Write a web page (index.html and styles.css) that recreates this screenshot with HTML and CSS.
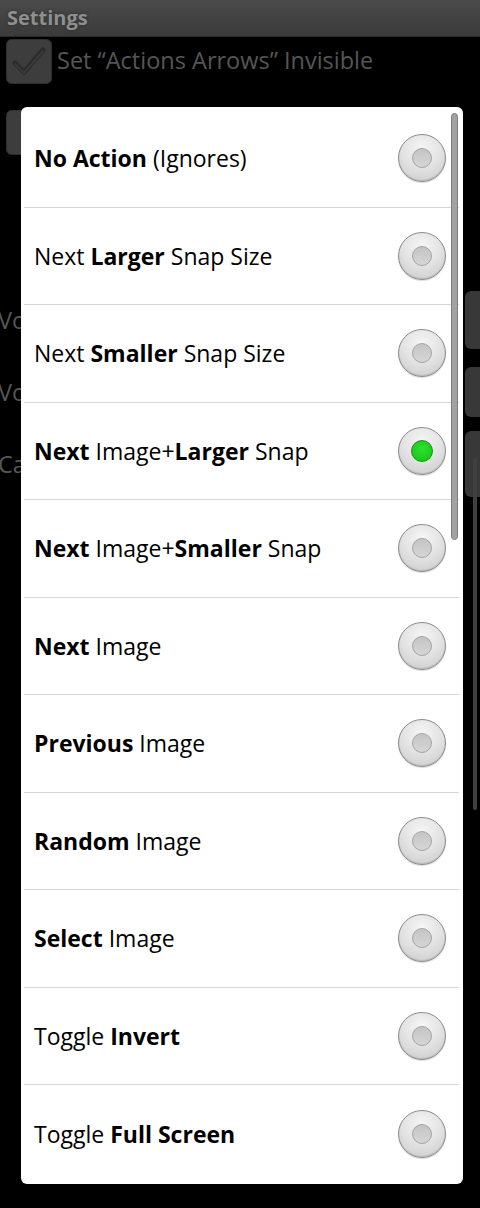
FILE: index.html
```html
<!DOCTYPE html>
<html>
<head>
<meta charset="utf-8">
<link rel="stylesheet" href="styles.css">
</head>
<body>
<div class="screen">
  <div class="titlebar">Settings</div>
  <div class="prefs">
    <div class="pref pref-check">
      <svg class="checkbox" viewBox="0 0 46 45" width="46" height="45">
        <rect x="0.5" y="0.5" width="45" height="44" rx="5" fill="#3d3d3d" stroke="#2e2e2e"/>
        <path d="M9 24 L18 33 L37 11" fill="none" stroke="#2c2c2c" stroke-width="5" stroke-linecap="round" stroke-linejoin="round"/>
        <path d="M9 25 L18 34 L37 12" fill="none" stroke="#4a4a4a" stroke-width="1.5" stroke-linecap="round" stroke-linejoin="round" opacity="0.6"/>
      </svg>
      <span class="pref-label">Set “Actions Arrows” Invisible</span>
    </div>
    <div class="pref pref-check2">
      <svg class="checkbox" viewBox="0 0 46 45" width="46" height="45">
        <rect x="0.5" y="0.5" width="45" height="44" rx="5" fill="#3d3d3d" stroke="#2e2e2e"/>
      </svg>
    </div>
    <div class="pref pref-row first">
      <span class="pref-label">Volume Up Action</span>
      <span class="pref-btn"></span>
    </div>
    <div class="pref pref-row">
      <span class="pref-label">Volume Down Action</span>
      <span class="pref-btn short"></span>
    </div>
    <div class="pref pref-row">
      <span class="pref-label">Camera Action</span>
      <span class="pref-btn tall"></span>
    </div>
  </div>
  <div class="bg-scroll"></div>

  <div class="dialog">
    <div class="list">
      <div class="item"><span class="label"><b>No Action</b> (Ignores)</span><span class="radio"></span></div>
      <div class="item"><span class="label">Next <b>Larger</b> Snap Size</span><span class="radio"></span></div>
      <div class="item"><span class="label">Next <b>Smaller</b> Snap Size</span><span class="radio"></span></div>
      <div class="item"><span class="label"><b>Next</b> Image+<b>Larger</b> Snap</span><span class="radio on"></span></div>
      <div class="item"><span class="label"><b>Next</b> Image+<b>Smaller</b> Snap</span><span class="radio"></span></div>
      <div class="item"><span class="label"><b>Next</b> Image</span><span class="radio"></span></div>
      <div class="item"><span class="label"><b>Previous</b> Image</span><span class="radio"></span></div>
      <div class="item"><span class="label"><b>Random</b> Image</span><span class="radio"></span></div>
      <div class="item"><span class="label"><b>Select</b> Image</span><span class="radio"></span></div>
      <div class="item"><span class="label">Toggle <b>Invert</b></span><span class="radio"></span></div>
      <div class="item"><span class="label">Toggle <b>Full Screen</b></span><span class="radio"></span></div>
    </div>
    <div class="scrollbar"></div>
  </div>
</div>
</body>
</html>
```

FILE: styles.css
```css
* { box-sizing: border-box; }
html, body { margin: 0; padding: 0; background: #000; }
body { font-family: "Open Sans", "Noto Sans", sans-serif; }

.screen {
  position: relative;
  width: 480px;
  height: 1208px;
  background: #000;
  overflow: hidden;
}

.titlebar {
  height: 37px;
  background: linear-gradient(#4b4b4b, #3a3a3a);
  color: #8f8f8f;
  font-weight: bold;
  font-size: 20px;
  line-height: 36px;
  padding-left: 7px;
  text-shadow: 0 0 3px #2a2a2a;
  border-bottom: 1px solid #2a2a2a;
}

.prefs { display: flex; flex-direction: column; }

.pref { display: flex; align-items: center; }
.pref-label {
  color: #565656;
  font-size: 23.5px;
  white-space: nowrap;
}

.pref-check { height: 71px; padding-left: 6px; align-items: flex-start; padding-top: 2px; }
.pref-check .pref-label { margin-left: 5px; line-height: 43px; }
.checkbox { display: block; flex: none; }

.pref-check2 { height: 150px; padding-left: 6px; align-items: flex-start; padding-top: 2px; }

.pref-row {
  height: 72px;
  justify-content: space-between;
}
.pref-row .pref-label { margin-left: -2px; }
.pref-row.first { margin-top: 26px; }

.pref-btn {
  width: 20px;
  height: 58px;
  margin-right: -5px;
  border-radius: 6px;
  background: #383838;
}
.pref-btn.short { height: 50px; }
.pref-btn.tall { height: 66px; }

.bg-scroll {
  position: absolute;
  left: 473px;
  top: 458px;
  width: 4px;
  height: 352px;
  border-radius: 2px;
  background: #404040;
}

.dialog {
  position: absolute;
  left: 21px;
  top: 107px;
  width: 442px;
  height: 1077px;
  background: #fff;
  border-radius: 6px;
  padding: 3px 4px 3px 3px;
}

.list { display: flex; flex-direction: column; }

.item {
  height: 97.5px;
  display: flex;
  align-items: center;
  justify-content: space-between;
  padding: 0 13px 0 10px;
  border-bottom: 1.5px solid #d6d6d6;
}
.item:last-child { border-bottom: none; }

.label {
  color: #000;
  font-size: 23px;
  white-space: nowrap;
}
.label b { font-weight: 700; }

.radio {
  position: relative;
  width: 48px;
  height: 48px;
  border-radius: 50%;
  background: radial-gradient(circle at 50% 30%, #f6f6f6 0%, #e4e4e4 45%, #c9c9c9 100%);
  border: 1px solid #8c8c8c;
  box-shadow: inset 0 -1px 1px rgba(0,0,0,0.12), 0 1px 1px rgba(0,0,0,0.15);
  flex: none;
}
.radio::after {
  content: "";
  position: absolute;
  left: 13px;
  top: 13px;
  width: 20px;
  height: 20px;
  border-radius: 50%;
  background: linear-gradient(#c4c4c4, #d6d6d6);
  border: 1px solid #a4a4a4;
  box-sizing: border-box;
}
.radio.on::after {
  left: 12px;
  top: 12px;
  width: 22px;
  height: 22px;
  background: radial-gradient(circle at 50% 40%, #2fe02f, #14c214);
  border: 1px solid #149014;
}

.scrollbar {
  position: absolute;
  left: 430px;
  top: 6px;
  width: 7px;
  height: 427px;
  border-radius: 4px;
  background: #a2a2a2;
  border: 1px solid #7e7e7e;
}
```
